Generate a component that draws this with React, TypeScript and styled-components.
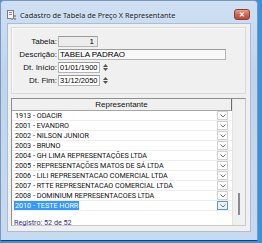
import React from 'react';
import styled, { createGlobalStyle } from 'styled-components';

const GlobalStyle = createGlobalStyle`
    html, body {
        margin: 0;
        padding: 0;
        width: 262px;
        height: 243px;
        overflow: hidden;
        background: #3a92da;
    }
    * { box-sizing: border-box; }
`

const Window = styled.div`
    width: 258px;
    height: 241px;
    display: flex;
    flex-direction: column;
    padding: 0 6px 8px 6px;
    border: 1px solid #7a98bb;
    border-bottom-color: #1f3f63;
    border-radius: 4px 4px 0 0;
    background: linear-gradient(#cfe0f3, #bfd4ec 30%, #c8daef);
    font-family: "Liberation Sans", Arial, sans-serif;
`

const TitleBar = styled.div`
    height: 22px;
    display: flex;
    align-items: center;
    padding-top: 5px;
    gap: 3px;
    span {
        flex: 1;
        font-family: "Noto Sans", sans-serif;
        font-size: 7.3px;
        color: #1b1b1b;
        white-space: nowrap;
        overflow: hidden;
        text-shadow: 0 0 3px #e6f0fb;
    }
`

const CloseButton = styled.div`
    width: 16px;
    height: 11px;
    margin-right: 1px;
    border: 1px solid #86402f;
    border-radius: 3px;
    background: linear-gradient(#e6a493, #cf6450 50%, #bd4a35);
    display: flex;
    align-items: center;
    justify-content: center;
    color: #fff;
    font-size: 7px;
    font-weight: bold;
    line-height: 1;
`

const Client = styled.div`
    flex: 1;
    display: flex;
    flex-direction: column;
    gap: 4px;
    padding: 3px 4px 5px 3px;
    background: #f0f0f0;
    border: 1px solid #a9bdd6;
`

const GroupBox = styled.div`
    display: grid;
    grid-template-columns: 45px 1fr;
    column-gap: 1px;
    row-gap: 2px;
    padding: 8px 19px 7px 0;
    border: 1px solid #d9d9d9;
    box-shadow: inset 1px 1px 0 #fbfbfb;
    font-size: 8px;
`

const Label = styled.label`
    justify-self: end;
    align-self: center;
    color: #111;
    white-space: nowrap;
`

const FieldRow = styled.div`
    display: flex;
    align-items: center;
    gap: 1px;
`

const TextBox = styled.div<{ $width?: number; $right?: boolean; $bg?: string; $small?: boolean }>`
    width: ${p => (p.$width ? `${p.$width}px` : '100%')};
    height: 11px;
    padding: 0 3px 0 1px;
    border: 1px solid #b5b5b5;
    border-top-color: #9a9a9a;
    background: ${p => p.$bg ?? '#fff'};
    font-size: ${p => (p.$small ? '7.5px' : '8px')};
    line-height: 9px;
    color: #000;
    text-align: ${p => (p.$right ? 'right' : 'left')};
    white-space: nowrap;
    overflow: hidden;
`

const Spinner = styled.div`
    width: 9px;
    height: 11px;
    display: flex;
    flex-direction: column;
    align-items: center;
    justify-content: center;
    gap: 1px;
    svg { display: block; }
`

const Grid = styled.div`
    flex: 1;
    display: flex;
    border: 1px solid #8e8f8f;
    border-right-color: #c9c9c9;
    border-bottom-color: #c9c9c9;
    background: #fff;
`

const GridMain = styled.div`
    flex: 1;
    display: flex;
    flex-direction: column;
`

const Header = styled.div`
    height: 12px;
    display: flex;
    align-items: center;
    justify-content: center;
    background: #f0f0f0;
    border-right: 1px solid #6b6b6b;
    border-bottom: 1px solid #a6a6a6;
    font-size: 8px;
    color: #111;
`

const Row = styled.div`
    height: 10px;
    display: flex;
    align-items: center;
    padding: 0 4px 0 2px;
    border-bottom: 1px solid #ededed;
    font-family: Roboto, sans-serif;
    font-size: 7.2px;
`

const Cell = styled.span<{ $selected?: boolean }>`
    flex: 1;
    white-space: nowrap;
    overflow: hidden;
    span {
        padding: 0 1px;
        color: ${p => (p.$selected ? '#fff' : '#111')};
        background: ${p => (p.$selected ? '#3399ff' : 'transparent')};
    }
`

const DropButton = styled.div<{ $focused?: boolean }>`
    width: 11px;
    height: 9px;
    display: flex;
    align-items: center;
    justify-content: center;
    border: 1px solid ${p => (p.$focused ? '#5b9ad9' : '#d2d2d2')};
    background: ${p => (p.$focused ? '#e6f1fb' : '#fff')};
`

const Footer = styled.div`
    flex: 1;
    display: flex;
    align-items: flex-end;
    padding: 0 0 0 2px;
    font-family: Roboto, sans-serif;
    font-size: 7.2px;
    line-height: 5px;
    color: #2e2e86;
`

const ScrollBar = styled.div`
    width: 13px;
    display: flex;
    flex-direction: column;
    justify-content: flex-end;
    align-items: center;
    padding-bottom: 10px;
    background: #f0f0f0;
    border-left: 1px solid #e2e2e2;
`

const Thumb = styled.div`
    width: 2px;
    height: 22px;
    background: #8c8c8c;
`

const representantes = [
    '1913 - ODACIR',
    '2001 - EVANDRO',
    '2002 - NILSON JUNIOR',
    '2003 - BRUNO',
    '2004 - GH LIMA REPRESENTAÇÕES LTDA',
    '2005 - REPRESENTAÇÕES MATOS DE SÁ LTDA',
    '2006 - LILI REPRESENTACAO COMERCIAL LTDA',
    '2007 - RTTE REPRESENTACAO COMERCIAL LTDA',
    '2008 - DOMINIUM REPRESENTACOES LTDA',
    '2010 - TESTE HORR',
]

function AppIcon() {
    return (
        <svg width="10" height="10" viewBox="0 0 10 10">
            <rect x="0.5" y="0.5" width="6" height="8" fill="#f4f4f4" stroke="#7d7d7d" />
            <rect x="2" y="2" width="3" height="1" fill="#8a8a8a" />
            <rect x="2" y="4" width="3" height="1" fill="#8a8a8a" />
            <rect x="7" y="5" width="2" height="2" fill="#9a9a9a" />
            <rect x="7" y="8" width="2" height="2" fill="#9a9a9a" />
            <rect x="4" y="8" width="2" height="2" fill="#9a9a9a" />
        </svg>
    )
}

function Chevron() {
    return (
        <svg width="6" height="4" viewBox="0 0 6 4">
            <polyline points="0.5,0.5 3,3 5.5,0.5" fill="none" stroke="#7a7a7a" strokeWidth="1" />
        </svg>
    )
}

function DateSpinner() {
    return (
        <Spinner>
            <svg width="5" height="3" viewBox="0 0 5 3"><polygon points="2.5,0 5,3 0,3" fill="#555" /></svg>
            <svg width="5" height="3" viewBox="0 0 5 3"><polygon points="0,0 5,0 2.5,3" fill="#555" /></svg>
        </Spinner>
    )
}

function App() {
    return (
        <>
            <GlobalStyle />
            <Window>
                <TitleBar>
                    <AppIcon />
                    <span>Cadastro de Tabela de Preço X Representante</span>
                    <CloseButton>✕</CloseButton>
                </TitleBar>
                <Client>
                    <GroupBox>
                        <Label>Tabela:</Label>
                        <FieldRow><TextBox $width={40} $right $bg='#ececec'>1</TextBox></FieldRow>
                        <Label>Descrição:</Label>
                        <FieldRow><TextBox $bg='#f7f7f7'>TABELA PADRAO</TextBox></FieldRow>
                        <Label>Dt. Início:</Label>
                        <FieldRow><TextBox $width={42} $small>01/01/1900</TextBox><DateSpinner /></FieldRow>
                        <Label>Dt. Fim:</Label>
                        <FieldRow><TextBox $width={42} $small>31/12/2050</TextBox><DateSpinner /></FieldRow>
                    </GroupBox>
                    <Grid>
                        <GridMain>
                            <Header>Representante</Header>
                            {representantes.map((nome, i) => {
                                const last = i === representantes.length - 1;
                                return (
                                    <Row key={nome}>
                                        <Cell $selected={last}><span>{nome}</span></Cell>
                                        <DropButton $focused={last}><Chevron /></DropButton>
                                    </Row>
                                )
                            })}
                            <Footer>Registro: 52 de 52</Footer>
                        </GridMain>
                        <ScrollBar><Thumb /></ScrollBar>
                    </Grid>
                </Client>
            </Window>
        </>
    )
}

export default App;
